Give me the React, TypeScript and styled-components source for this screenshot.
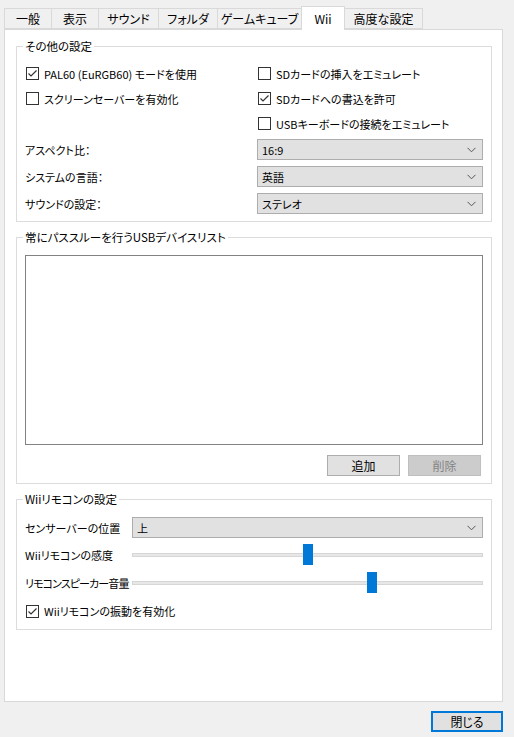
import React from "react";
import styled, { createGlobalStyle } from "styled-components";

const Global = createGlobalStyle`
  html, body { margin: 0; padding: 0; background: #f0f0f0; }
  body {
    font-family: "Noto Sans CJK JP", "Noto Sans", sans-serif;
    font-size: 11px;
    color: #000;
    font-feature-settings: "palt";
  }
  * { box-sizing: border-box; }
`;

const Window = styled.div`
  width: 514px;
  height: 737px;
  padding-top: 6px;
  display: flex;
  flex-direction: column;
`;

const TabStrip = styled.div`
  display: flex;
  align-items: flex-end;
  height: 23px;
  padding-left: 4px;
  position: relative;
  z-index: 1;
`;

const Tab = styled.div<{ $w: number; $active?: boolean }>`
  width: ${(p) => p.$w}px;
  height: ${(p) => (p.$active ? 24 : 21)}px;
  margin-bottom: ${(p) => (p.$active ? -1 : 0)}px;
  margin-left: -1px;
  display: flex;
  align-items: center;
  justify-content: center;
  border: 1px solid #d9d9d9;
  border-bottom: ${(p) => (p.$active ? "none" : "1px solid #d9d9d9")};
  background: ${(p) => (p.$active ? "#ffffff" : "#f0f0f0")};
  padding-top: ${(p) => (p.$active ? 0 : 1)}px;
  font-size: 12px;
  line-height: 16px;
  &:first-child { margin-left: 0; }
`;

const Panel = styled.div`
  margin: 0 11px 0 4px;
  height: 673px;
  background: #fff;
  border: 1px solid #d9d9d9;
  padding: 8px 10px 0 11px;
  display: flex;
  flex-direction: column;
  gap: 7px;
`;

const Group = styled.fieldset<{ $pb?: number }>`
  margin: 0;
  border: 1px solid #dcdcdc;
  padding: 7px 8px ${(p) => p.$pb ?? 7}px 8px;
  min-width: 0;
`;

const Legend = styled.legend`
  padding: 0 2px;
  margin-left: -2px;
  line-height: 16px;
  height: 16px;
  font-size: 11.5px;
`;

const OtherGrid = styled.div`
  display: grid;
  grid-template-columns: 232px 1fr;
  grid-auto-rows: 25px;
  align-items: center;
`;

const ComboGrid = styled.div`
  display: grid;
  grid-template-columns: 232px 1fr;
  grid-auto-rows: 21px;
  row-gap: 6px;
  align-items: center;
  margin-top: 3px;
`;

const CheckRow = styled.label`
  display: flex;
  align-items: center;
  gap: 5px;
  height: 25px;
  line-height: 16px;
  white-space: nowrap;
`;

const Box = styled.span`
  width: 13px;
  height: 13px;
  border: 1px solid #333;
  background: #fff;
  display: inline-flex;
  align-items: center;
  justify-content: center;
  flex: none;
  margin-left: 1px;
`;

const Check: React.FC<{ checked?: boolean; label: string }> = ({ checked, label }) => (
  <CheckRow>
    <Box>
      {checked && (
        <svg width="11" height="11" viewBox="0 0 11 11">
          <polyline points="1.5,5.5 4,8 9.5,2.5" fill="none" stroke="#333" strokeWidth="1.2" />
        </svg>
      )}
    </Box>
    {label}
  </CheckRow>
);

const Label = styled.span<{ $tight?: boolean }>`
  line-height: 16px;
  white-space: nowrap;
  letter-spacing: ${(p) => (p.$tight ? "-0.9px" : "0")};
`;

const ComboBox = styled.div`
  height: 21px;
  background: #e1e1e1;
  border: 1px solid #adadad;
  display: flex;
  align-items: center;
  justify-content: space-between;
  padding: 0 6px 0 4px;
  line-height: 16px;
`;

const Combo: React.FC<{ value: string }> = ({ value }) => (
  <ComboBox>
    <span>{value}</span>
    <svg width="9" height="6" viewBox="0 0 9 6">
      <polyline points="0.5,0.8 4.5,4.8 8.5,0.8" fill="none" stroke="#555" strokeWidth="1" />
    </svg>
  </ComboBox>
);

const ListBox = styled.div`
  height: 190px;
  margin-top: 3px;
  border: 1px solid #828282;
  background: #fff;
`;

const ButtonRow = styled.div`
  display: flex;
  justify-content: flex-end;
  gap: 8px;
  margin-top: 10px;
  padding-right: 2px;
`;

const Btn = styled.button<{ $disabled?: boolean }>`
  width: 73px;
  height: 21px;
  font: inherit;
  font-size: 12px;
  font-feature-settings: "palt";
  line-height: 16px;
  padding: 0;
  background: ${(p) => (p.$disabled ? "#cccccc" : "#e1e1e1")};
  border: 1px solid ${(p) => (p.$disabled ? "#bfbfbf" : "#adadad")};
  color: ${(p) => (p.$disabled ? "#838383" : "#000")};
`;

const RemoteGrid = styled.div`
  display: grid;
  grid-template-columns: 107px 1fr;
  grid-template-rows: 21px 23px 23px 24px;
  row-gap: 5px;
  align-items: center;
  margin-top: 3px;
`;

const SliderWrap = styled.div`
  position: relative;
  height: 23px;
  display: flex;
  align-items: center;
`;

const Track = styled.div`
  width: 100%;
  height: 4px;
  background: #e7e7e7;
  border: 1px solid #d6d6d6;
`;

const Thumb = styled.div`
  position: absolute;
  top: 1px;
  width: 10px;
  height: 21px;
  background: #0078d7;
`;

const Slider: React.FC<{ ratio: number }> = ({ ratio }) => (
  <SliderWrap>
    <Track />
    <Thumb style={{ left: `calc((100% - 10px) * ${ratio})` }} />
  </SliderWrap>
);

const FullRow = styled.div`
  grid-column: 1 / span 2;
`;

const Footer = styled.div`
  display: flex;
  justify-content: flex-end;
  padding: 9px 11px 0 0;
`;

const CloseBtn = styled.button`
  width: 72px;
  height: 21px;
  font: inherit;
  font-size: 12px;
  font-feature-settings: "palt";
  line-height: 16px;
  padding: 0;
  background: #e1e1e1;
  border: 2px solid #0078d7;
  color: #000;
`;

const tabs: [string, number][] = [
  ["一般", 48],
  ["表示", 48],
  ["サウンド", 61],
  ["フォルダ", 60],
  ["ゲームキューブ", 85],
  ["Wii", 44],
  ["高度な設定", 79],
];

export default function App() {
  return (
    <>
      <Global />
      <Window>
        <TabStrip>
          {tabs.map(([t, w]) => (
            <Tab key={t} $w={w} $active={t === "Wii"}>
              {t}
            </Tab>
          ))}
        </TabStrip>
        <Panel>
          <Group>
            <Legend>その他の設定</Legend>
            <OtherGrid>
              <Check checked label="PAL60 (EuRGB60) モードを使用" />
              <Check label="SDカードの挿入をエミュレート" />
              <Check label="スクリーンセーバーを有効化" />
              <Check checked label="SDカードへの書込を許可" />
              <span />
              <Check label="USBキーボードの接続をエミュレート" />
            </OtherGrid>
            <ComboGrid>
              <Label>アスペクト比：</Label>
              <Combo value="16:9" />
              <Label>システムの言語：</Label>
              <Combo value="英語" />
              <Label>サウンドの設定：</Label>
              <Combo value="ステレオ" />
            </ComboGrid>
          </Group>
          <Group>
            <Legend>常にパススルーを行うUSBデバイスリスト</Legend>
            <ListBox />
            <ButtonRow>
              <Btn>追加</Btn>
              <Btn $disabled disabled>
                削除
              </Btn>
            </ButtonRow>
          </Group>
          <Group $pb={6}>
            <Legend>Wiiリモコンの設定</Legend>
            <RemoteGrid>
              <Label>センサーバーの位置</Label>
              <Combo value="上" />
              <Label>Wiiリモコンの感度</Label>
              <Slider ratio={0.5} />
              <Label $tight>リモコンスピーカー音量</Label>
              <Slider ratio={0.69} />
              <FullRow>
                <Check checked label="Wiiリモコンの振動を有効化" />
              </FullRow>
            </RemoteGrid>
          </Group>
        </Panel>
        <Footer>
          <CloseBtn>閉じる</CloseBtn>
        </Footer>
      </Window>
    </>
  );
}
